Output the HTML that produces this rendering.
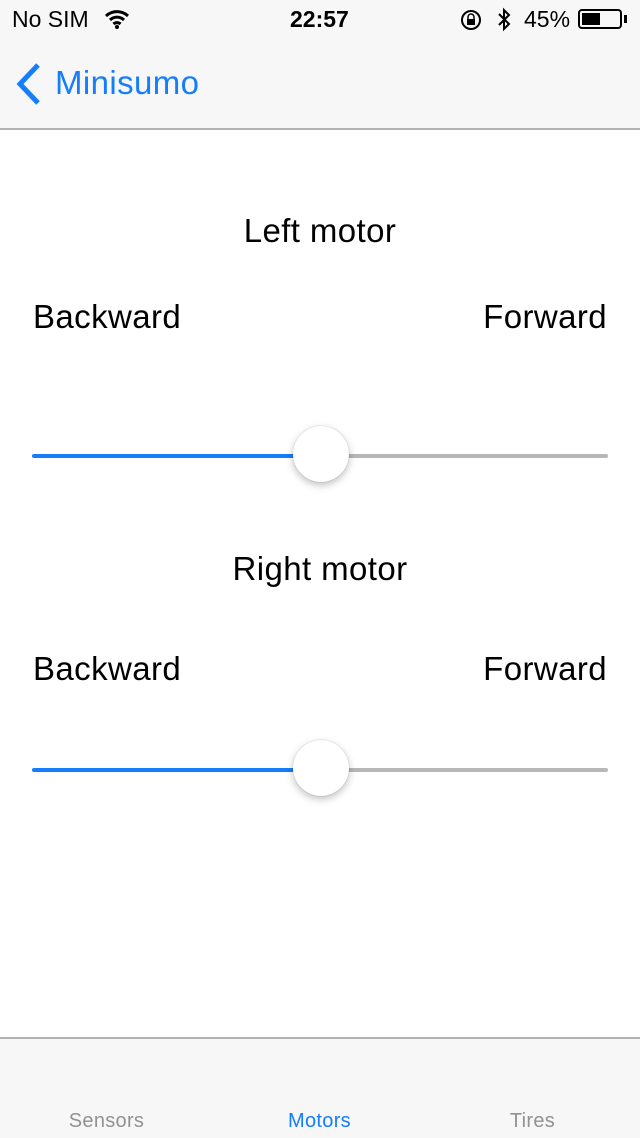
<!DOCTYPE html>
<html><head><style>
body{margin:0;width:640px;height:1136px;position:relative;background:#fff;font-family:"Liberation Sans",sans-serif;overflow:hidden}
.a{position:absolute;white-space:nowrap}
.nav{position:absolute;left:0;top:0;width:640px;height:128px;background:#f7f7f7;border-bottom:2px solid #b2b2b2}
.tab{position:absolute;left:0;top:1037px;width:640px;height:99px;background:#f7f7f7;border-top:2px solid #b2b2b2}
.lbl{font-size:33px;color:#000;letter-spacing:0.4px}
.track{position:absolute;height:4px;border-radius:2px}
.thumb{position:absolute;width:56px;height:56px;border-radius:50%;background:#fff;box-shadow:0 3px 8px rgba(0,0,0,.25),0 0 1px rgba(0,0,0,.3)}
</style></head><body>
<div class="nav"></div>
<div class="a" style="left:12px;top:6px;font-size:23px">No SIM</div>
<svg class="a" style="left:104px;top:9px" width="26" height="20" viewBox="0 0 26 20"><path d="M2 7a16 16 0 0 1 22 0M6 11a10 10 0 0 1 14 0M9.5 15a5 5 0 0 1 7 0" stroke="#000" stroke-width="3" fill="none"/><circle cx="13" cy="18" r="2" fill="#000"/></svg>
<div class="a" style="left:290px;top:6px;font-size:23px;font-weight:bold">22:57</div>
<svg class="a" style="left:460px;top:9px" width="24" height="22" viewBox="0 0 24 22"><circle cx="11" cy="11" r="9" stroke="#000" stroke-width="2" fill="none"/><rect x="7" y="10" width="8" height="6" fill="#000"/><path d="M8 10V8a3 3 0 0 1 6 0v2" stroke="#000" stroke-width="1.5" fill="none"/></svg>
<svg class="a" style="left:496px;top:7px" width="16" height="26" viewBox="0 0 16 26"><path d="M3 7l10 10-5 5V3l5 5L3 18" stroke="#000" stroke-width="2" fill="none"/></svg>
<div class="a" style="left:524px;top:6px;font-size:23px">45%</div>
<div class="a" style="left:578px;top:9px;width:44px;height:20px;border:2px solid #000;border-radius:4px;box-sizing:border-box"><div style="position:absolute;left:2px;top:2px;width:18px;height:12px;background:#000"></div></div>
<div class="a" style="left:624px;top:15px;width:3px;height:8px;background:#000"></div>
<svg class="a" style="left:14px;top:62px" width="30" height="44" viewBox="0 0 30 44"><path d="M24 3L6 22l18 19" stroke="#147efb" stroke-width="5" fill="none"/></svg>
<div class="a" style="left:55px;top:64px;font-size:33px;color:#147efb;letter-spacing:0.4px">Minisumo</div>

<div class="a lbl" style="left:0;width:640px;text-align:center;top:212px">Left motor</div>
<div class="a lbl" style="left:33px;top:298px">Backward</div>
<div class="a lbl" style="right:33px;top:298px">Forward</div>
<div class="track" style="left:32px;width:290px;top:454px;background:#147efb"></div>
<div class="track" style="left:320px;width:288px;top:454px;background:#b7b7b7"></div>
<div class="thumb" style="left:293px;top:426px"></div>

<div class="a lbl" style="left:0;width:640px;text-align:center;top:550px">Right motor</div>
<div class="a lbl" style="left:33px;top:650px">Backward</div>
<div class="a lbl" style="right:33px;top:650px">Forward</div>
<div class="track" style="left:32px;width:290px;top:768px;background:#147efb"></div>
<div class="track" style="left:320px;width:288px;top:768px;background:#b7b7b7"></div>
<div class="thumb" style="left:293px;top:740px"></div>

<div class="tab"></div>
<div class="a" style="left:0;width:213px;text-align:center;top:1110px;font-size:20px;color:#929292;letter-spacing:0.3px">Sensors</div>
<div class="a" style="left:213px;width:213px;text-align:center;top:1110px;font-size:20px;color:#147efb;letter-spacing:0.3px">Motors</div>
<div class="a" style="left:426px;width:213px;text-align:center;top:1110px;font-size:20px;color:#929292;letter-spacing:0.3px">Tires</div>
</body></html>
